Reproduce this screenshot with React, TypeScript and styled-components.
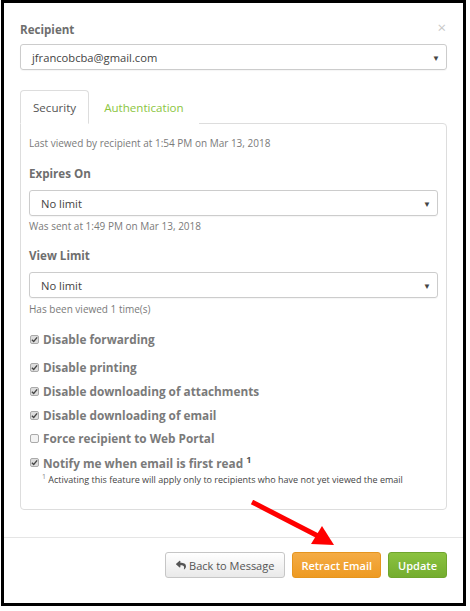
import React, { useState } from 'react';
import styled, { createGlobalStyle } from 'styled-components';
import { FaReply } from 'react-icons/fa';

const GlobalStyle = createGlobalStyle`
  html, body {
    margin: 0;
    padding: 0;
    background: #fff;
  }
  body {
    font-family: 'Open Sans', 'Noto Sans', Arial, sans-serif;
  }
`;

interface CheckItem {
  label: string;
  checked: boolean;
  gap: number;
  note?: boolean;
}

const checks: CheckItem[] = [
  { label: 'Disable forwarding', checked: true, gap: 14 },
  { label: 'Disable printing', checked: true, gap: 10 },
  { label: 'Disable downloading of attachments', checked: true, gap: 6 },
  { label: 'Disable downloading of email', checked: true, gap: 6 },
  { label: 'Force recipient to Web Portal', checked: false, gap: 5 },
  { label: 'Notify me when email is first read', checked: true, gap: 6, note: true },
];

const App = () => {
  const [tab, setTab] = useState<'security' | 'auth'>('security');

  return (
    <>
      <GlobalStyle />
      <Frame>
        <Body>
          <HeaderRow>
            <Label>Recipient</Label>
            <Close>×</Close>
          </HeaderRow>
          <Select>
            <span>jfrancobcba@gmail.com</span>
            <Caret>▼</Caret>
          </Select>

          <Tabs>
            <Tab active={tab === 'security'} onClick={() => setTab('security')}>
              Security
            </Tab>
            <Tab active={tab === 'auth'} onClick={() => setTab('auth')}>
              Authentication
            </Tab>
          </Tabs>
          <Panel>
            <Hint>Last viewed by recipient at 1:54 PM on Mar 13, 2018</Hint>

            <Label top={15}>Expires On</Label>
            <Select top={7}>
              <span>No limit</span>
              <Caret>▼</Caret>
            </Select>
            <Hint top={3}>Was sent at 1:49 PM on Mar 13, 2018</Hint>

            <Label top={14}>View Limit</Label>
            <Select top={7}>
              <span>No limit</span>
              <Caret>▼</Caret>
            </Select>
            <Hint top={4}>Has been viewed 1 time(s)</Hint>

            {checks.map((c) => (
              <CheckRow key={c.label} top={c.gap}>
                <Box checked={c.checked}>
                  {c.checked && (
                    <svg width="7" height="7" viewBox="0 0 8 8">
                      <path d="M1 4.2 L3.1 6.3 L7 1.6" fill="none" stroke="#444" strokeWidth="1.5" />
                    </svg>
                  )}
                </Box>
                <CheckLabel>
                  {c.label}
                  {c.note && <Sup>1</Sup>}
                </CheckLabel>
              </CheckRow>
            ))}
            <Footnote>
              <sup>1</sup> Activating this feature will apply only to recipients who have not yet viewed the email
            </Footnote>
          </Panel>
        </Body>

        <Footer>
          <Button variant="default">
            <FaReply size={10} />
            Back to Message
          </Button>
          <Button variant="warning">Retract Email</Button>
          <Button variant="success">Update</Button>
        </Footer>

        <Arrow width="100" height="60" viewBox="0 0 100 60">
          <line x1="2" y1="2" x2="68" y2="36" stroke="#f00" strokeWidth="5" />
          <polygon points="84,45 61,44 72,26" fill="#f00" />
        </Arrow>
      </Frame>
    </>
  );
};

export default App;

const Frame = styled.div`
  position: relative;
  box-sizing: border-box;
  margin-left: 1px;
  width: 465px;
  height: 606px;
  border: 3px solid #000;
  background: #fff;
  display: flex;
  flex-direction: column;
`;

const Body = styled.div`
  padding: 18px 16px 0 16px;
  display: flex;
  flex-direction: column;
`;

const HeaderRow = styled.div`
  display: flex;
  justify-content: space-between;
  align-items: center;
`;

const Label = styled.div<{ top?: number }>`
  margin-top: ${(p) => p.top ?? 0}px;
  font-size: 11.6px;
  line-height: 18px;
  font-weight: 700;
  color: #6e6e6e;
`;

const Close = styled.span`
  font-size: 15px;
  line-height: 18px;
  color: #c8c8c8;
  margin-top: -6px;
  margin-right: 1px;
`;

const Select = styled.div<{ top?: number }>`
  margin-top: ${(p) => p.top ?? 5}px;
  box-sizing: border-box;
  height: 26px;
  border: 1px solid #ccc;
  border-radius: 3px;
  display: flex;
  align-items: center;
  justify-content: space-between;
  padding: 0 6px 0 11px;
  font-size: 11.2px;
  color: #444;
  box-shadow: 0 1px 1px rgba(0, 0, 0, 0.04);
`;

const Caret = styled.span`
  font-size: 8px;
  color: #444;
`;

const Tabs = styled.div`
  margin-top: 20px;
  display: flex;
  align-items: flex-end;
  position: relative;
  z-index: 1;
  margin-bottom: -1px;
`;

const Tab = styled.div<{ active: boolean }>`
  box-sizing: border-box;
  height: 34px;
  display: flex;
  align-items: center;
  padding: 0 ${(p) => (p.active ? 12 : 14)}px;
  font-size: 11.6px;
  color: ${(p) => (p.active ? '#555' : '#8cc63f')};
  border: 1px solid ${(p) => (p.active ? '#ddd' : 'transparent')};
  border-bottom-color: ${(p) => (p.active ? '#fff' : 'transparent')};
  border-radius: 4px 4px 0 0;
  background: #fff;
  cursor: pointer;
`;

const Panel = styled.div`
  border: 1px solid #ddd;
  border-radius: 0 4px 4px 4px;
  padding: 12px 8px 23px 8px;
  display: flex;
  flex-direction: column;
`;

const Hint = styled.div<{ top?: number }>`
  margin-top: ${(p) => p.top ?? 0}px;
  font-size: 10px;
  line-height: 14px;
  color: #7a7a7a;
`;

const CheckRow = styled.div<{ top: number }>`
  margin-top: ${(p) => p.top}px;
  display: flex;
  align-items: center;
  height: 18px;
`;

const Box = styled.span<{ checked: boolean }>`
  box-sizing: border-box;
  width: 9px;
  height: 9px;
  margin-left: 1px;
  margin-right: 4px;
  border: 1px solid #aaa;
  border-radius: 2px;
  background: ${(p) => (p.checked ? '#ddd' : '#f3f3f3')};
  display: flex;
  align-items: center;
  justify-content: center;
`;

const CheckLabel = styled.span`
  font-size: 11.8px;
  font-weight: 700;
  color: #7a7a7a;
`;

const Sup = styled.sup`
  font-size: 9px;
  margin-left: 3px;
  color: #555;
`;

const Footnote = styled.div`
  margin-left: 13px;
  font-size: 9px;
  line-height: 12px;
  color: #444;
  sup {
    font-size: 7px;
    color: #888;
  }
`;

const Footer = styled.div`
  margin-top: 27px;
  border-top: 1px solid #e5e5e5;
  padding: 14px 16px 0 16px;
  display: flex;
  justify-content: flex-end;
  gap: 7px;
`;

const variants = {
  default: {
    bg: 'linear-gradient(#fff, #e9e9e9)',
    border: '#c6c6c6',
    color: '#555',
    weight: 400,
    pad: 10,
  },
  warning: {
    bg: 'linear-gradient(#f4ac46, #ee9a22)',
    border: '#e5951f',
    color: '#fff',
    weight: 600,
    pad: 8,
  },
  success: {
    bg: 'linear-gradient(#8bc240, #74ad2f)',
    border: '#6fa52d',
    color: '#fff',
    weight: 600,
    pad: 9,
  },
};

const Button = styled.button<{ variant: keyof typeof variants }>`
  box-sizing: border-box;
  height: 26px;
  padding: 0 ${(p) => variants[p.variant].pad}px;
  display: flex;
  align-items: center;
  gap: 3px;
  font-family: inherit;
  font-size: 11px;
  font-weight: ${(p) => variants[p.variant].weight};
  color: ${(p) => variants[p.variant].color};
  background: ${(p) => variants[p.variant].bg};
  border: 1px solid ${(p) => variants[p.variant].border};
  border-radius: 3px;
  cursor: pointer;
`;

const Arrow = styled.svg`
  position: absolute;
  left: 246px;
  top: 497px;
  pointer-events: none;
`;
